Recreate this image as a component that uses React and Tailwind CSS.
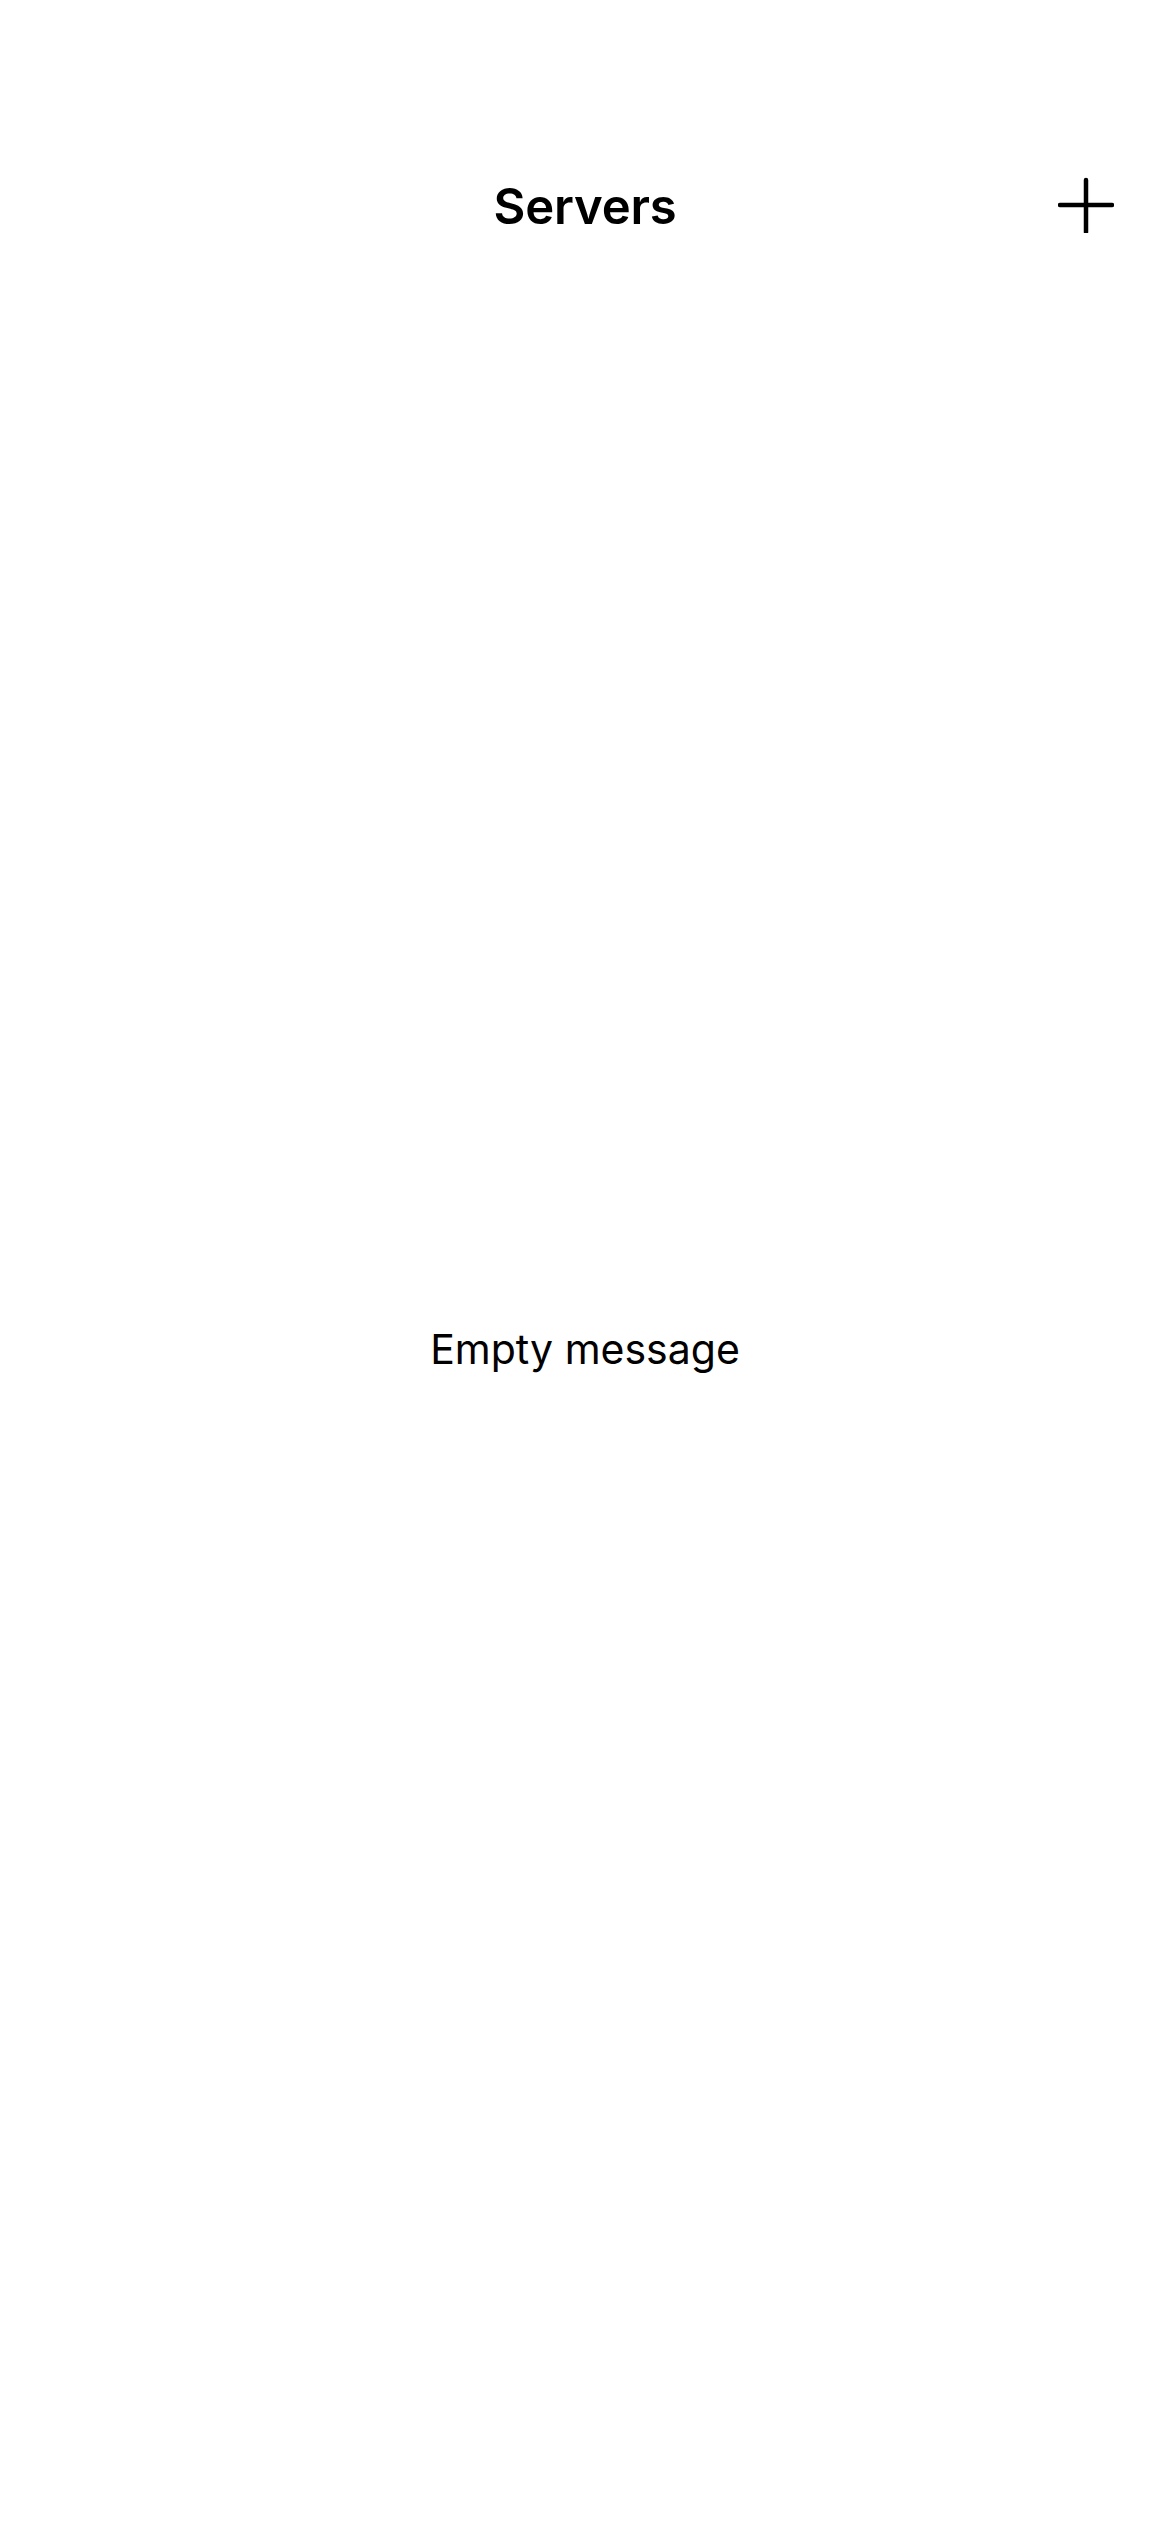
export default function App() {
  return (
    <div
      className="flex h-[2532px] w-[1170px] flex-col bg-white text-black"
      style={{ fontFamily: 'Inter, "Liberation Sans", sans-serif' }}
    >
      {/* nav bar */}
      <div className="relative flex h-[264px] shrink-0 items-start justify-center pt-[176px]">
        <h1 className="h-[62px] text-[49px] font-semibold leading-[62px] tracking-[-0.2px]">Servers</h1>
        <button className="absolute right-[56px] top-[177px] flex h-[56px] w-[56px] items-center justify-center">
          <svg width="56" height="56" viewBox="0 0 56 56" fill="none" stroke="currentColor" strokeWidth="4.5" strokeLinecap="round">
            <path d="M28 3v52M2 28h52" />
          </svg>
        </button>
      </div>

      {/* empty state */}
      <div className="flex flex-1 items-center justify-center pb-[98px]">
        <p className="text-[41px] leading-[56px]">Empty message</p>
      </div>
    </div>
  );
}
